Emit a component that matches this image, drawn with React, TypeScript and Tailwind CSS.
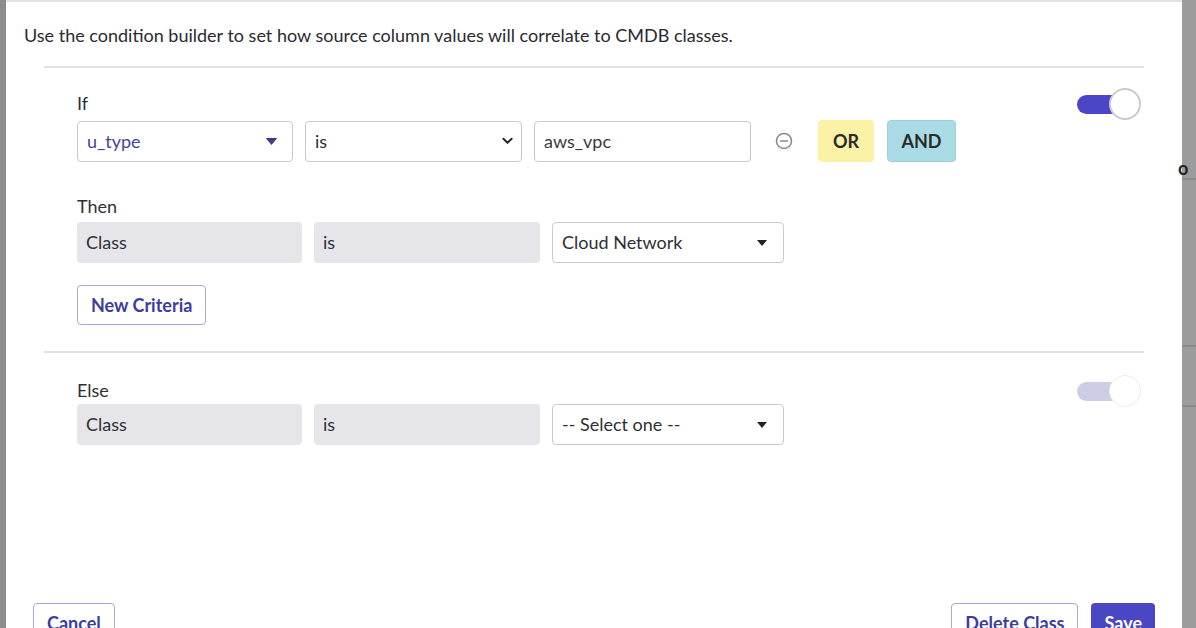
import React from "react";

const BOX = "flex h-[41px] shrink-0 items-center rounded-[4px] px-[9px] text-[18px]";
const FIELD = `${BOX} border border-[#c9c9cf] bg-white`;
const STATIC = `${BOX} bg-[#e6e6ea] text-[#2f2f35]`;
const OUTLINE_BTN =
  "h-[40px] rounded-[4px] border border-[#a9a7d6] bg-white px-[13px] text-[18px] font-bold text-[#3e3c9e]";

function Caret({ className }: { className?: string }) {
  return (
    <svg viewBox="0 0 10 6" className={className} aria-hidden>
      <path d="M0 0h10L5 6z" fill="currentColor" />
    </svg>
  );
}

function Chevron() {
  return (
    <svg viewBox="0 0 12 8" className="h-[8px] w-[11px]" aria-hidden>
      <path d="M1.5 1.5 6 6l4.5-4.5" fill="none" stroke="#2a2a2a" strokeWidth="2.2" strokeLinecap="round" strokeLinejoin="round" />
    </svg>
  );
}

function Toggle({ on }: { on: boolean }) {
  return (
    <div className="relative h-[32px] w-[64px]">
      <div
        className={`absolute left-0 top-[7px] h-[19px] w-[50px] rounded-full ${
          on ? "bg-[#4a46c6]" : "bg-[#cfcde6]"
        }`}
      />
      <div
        className={`absolute right-0 top-0 h-[32px] w-[32px] rounded-full bg-white ${
          on ? "border-2 border-[#c9c9cf]" : "border border-[#ededf0]"
        }`}
      />
    </div>
  );
}

function Divider() {
  return <div className="mx-[38px] h-[2px] bg-[#e2e2e4]" />;
}

export default function App() {
  return (
    <div className="flex h-[628px] w-[1196px] overflow-hidden bg-[#9a9a9a] font-['Lato','Noto_Sans',sans-serif] text-[#2f2f35]">
      <div className="w-[6px] shrink-0 bg-[#8c8c8c]" />

      <div className="flex w-[1176px] shrink-0 flex-col bg-white">
        <div className="h-[6px] border-b-2 border-[#e2e2e4]" />

        <p className="mt-[21px] pl-[18px] text-[18px] leading-6 text-[#2a2a30]">
          Use the condition builder to set how source column values will correlate to CMDB classes.
        </p>

        <div className="mt-[19px]">
          <Divider />
        </div>

        {/* If */}
        <div className="mt-[24px] flex justify-between pl-[71px] pr-[41px]">
          <div>
            <div className="text-[18px] leading-[22px]">If</div>
            <div className="mt-[6px] flex items-center">
              <div className={`${FIELD} w-[216px] justify-between pr-[14px] text-[#45459c]`}>
                <span>u_type</span>
                <Caret className="h-[7px] w-[13px] text-[#3a3a90]" />
              </div>
              <div className={`${FIELD} ml-[12px] w-[217px] justify-between border-[#b9b9be] pr-[8px]`}>
                <span>is</span>
                <Chevron />
              </div>
              <div className={`${FIELD} ml-[12px] w-[217px] text-[17px] text-[#3a3a3a]`}>aws_vpc</div>
              <svg viewBox="0 0 18 18" className="ml-[24px] h-[18px] w-[18px]" aria-hidden>
                <circle cx="9" cy="9" r="7.5" fill="none" stroke="#8a8a96" strokeWidth="1.6" />
                <path d="M5.5 9h7" stroke="#8a8a96" strokeWidth="1.6" strokeLinecap="round" />
              </svg>
              <button className="ml-[25px] h-[42px] w-[56px] rounded-[4px] bg-[#fcf2a6] text-[18px] font-bold text-[#2a2a2a]">
                OR
              </button>
              <button className="ml-[13px] h-[42px] w-[69px] rounded-[4px] border border-[#9fcfd9] bg-[#a9dbe6] text-[18px] font-bold text-[#2a2a2a]">
                AND
              </button>
            </div>

            {/* Then */}
            <div className="mt-[33px] text-[18px] leading-[22px]">Then</div>
            <div className="mt-[5px] flex items-center">
              <div className={`${STATIC} w-[225px]`}>Class</div>
              <div className={`${STATIC} ml-[12px] w-[226px]`}>is</div>
              <div className={`${FIELD} ml-[12px] w-[232px] justify-between pr-[16px] text-[#2f2f35]`}>
                <span>Cloud Network</span>
                <Caret className="h-[6px] w-[10px] text-[#222]" />
              </div>
            </div>

            <button className={`mt-[22px] h-[39px] ${OUTLINE_BTN}`}>New Criteria</button>
          </div>
          <div className="-mt-[4px]">
            <Toggle on />
          </div>
        </div>

        <div className="mt-[26px]">
          <Divider />
        </div>

        {/* Else */}
        <div className="mt-[26px] flex justify-between pl-[71px] pr-[41px]">
          <div>
            <div className="text-[18px] leading-[22px]">Else</div>
            <div className="mt-[3px] flex items-center">
              <div className={`${STATIC} w-[225px]`}>Class</div>
              <div className={`${STATIC} ml-[12px] w-[226px]`}>is</div>
              <div className={`${FIELD} ml-[12px] w-[232px] justify-between pr-[16px] text-[#2f2f35]`}>
                <span>-- Select one --</span>
                <Caret className="h-[6px] w-[10px] text-[#222]" />
              </div>
            </div>
          </div>
          <div className="-mt-[4px]">
            <Toggle on={false} />
          </div>
        </div>

        {/* Footer */}
        <div className="mt-[158px] flex items-start justify-between px-[27px]">
          <button className={OUTLINE_BTN}>Cancel</button>
          <div className="flex gap-[13px]">
            <button className={OUTLINE_BTN}>Delete Class</button>
            <button className="h-[40px] rounded-[4px] bg-[#4a46c4] px-[13px] text-[18px] font-bold text-white">
              Save
            </button>
          </div>
        </div>
      </div>

      <div className="relative flex-1 bg-[#9c9c9c]">
        <div className="mt-[178px] h-[2px] bg-[#8a8a8a]" />
        <div className="absolute left-[-4px] top-[158px] text-[18px] font-bold leading-5 text-[#222]">o</div>
        <div className="mt-[165px] h-[2px] bg-[#8a8a8a]" />
        <div className="mt-[58px] h-[2px] bg-[#8a8a8a]" />
      </div>
    </div>
  );
}
